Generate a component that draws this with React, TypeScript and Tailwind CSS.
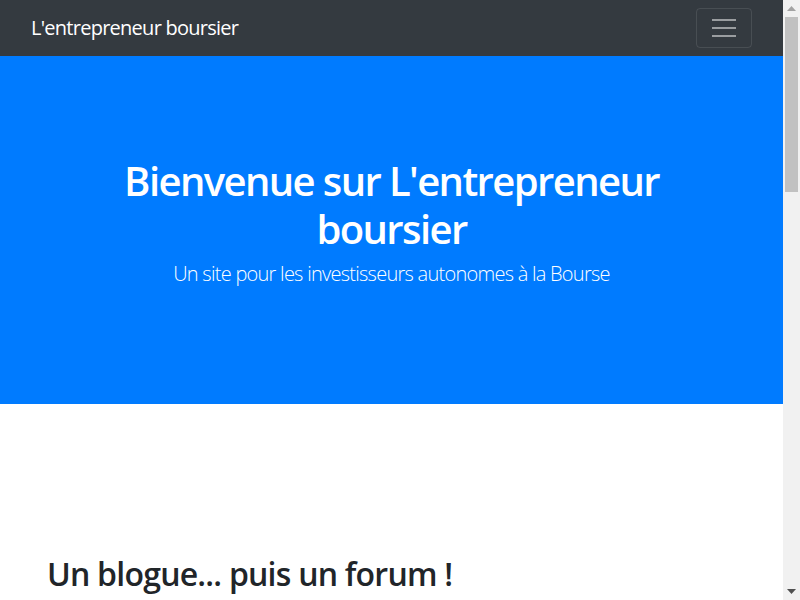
import React from "react"

const font = { fontFamily: '"Open Sans", "Noto Sans", sans-serif' }

function Navbar() {
  return (
    <nav className="h-14 bg-[#343a40] flex items-center justify-between px-[31px] shrink-0">
      <a href="#" className="text-white text-[20px] leading-[30px] tracking-[-0.037em]">
        L'entrepreneur boursier
      </a>
      <button className="w-14 h-10 border border-white/10 rounded flex flex-col items-center justify-center gap-[6px]">
        <span className="block w-6 h-[2px] bg-white/50" />
        <span className="block w-6 h-[2px] bg-white/50" />
        <span className="block w-6 h-[2px] bg-white/50" />
      </button>
    </nav>
  )
}

function Hero() {
  return (
    <section className="h-[348px] bg-[#007bff] text-white text-center pt-[101px] shrink-0">
      <h1 className="text-[40px] leading-[48px] font-semibold tracking-[-0.04em] mx-auto max-w-[600px] mb-[6px]">
        Bienvenue sur L'entrepreneur boursier
      </h1>
      <p className="text-[20px] leading-[30px] font-light tracking-[-0.037em]">
        Un site pour les investisseurs autonomes à la Bourse
      </p>
    </section>
  )
}

function Scrollbar() {
  return (
    <div className="w-[17px] h-full bg-[#f1f1f1] flex flex-col shrink-0">
      <div className="h-[17px] flex items-center justify-center">
        <svg width="9" height="5" viewBox="0 0 9 5">
          <path d="M0 5 L4.5 0 L9 5 Z" fill="#a3a3a3" />
        </svg>
      </div>
      <div className="h-[175px] mx-[2px] bg-[#c1c1c1]" />
      <div className="flex-1" />
      <div className="h-[17px] flex items-center justify-center">
        <svg width="9" height="5" viewBox="0 0 9 5">
          <path d="M0 0 L9 0 L4.5 5 Z" fill="#505050" />
        </svg>
      </div>
    </div>
  )
}

export default function App() {
  return (
    <div className="h-screen w-full flex overflow-hidden bg-white" style={font}>
      <div className="flex-1 flex flex-col overflow-hidden">
        <Navbar />
        <Hero />
        <main className="pt-[151px] px-[47px]">
          <h2 className="text-[32px] leading-[38px] font-semibold tracking-[-0.024em] text-[#212529]">
            Un blogue... puis un forum !
          </h2>
        </main>
      </div>
      <Scrollbar />
    </div>
  )
}
